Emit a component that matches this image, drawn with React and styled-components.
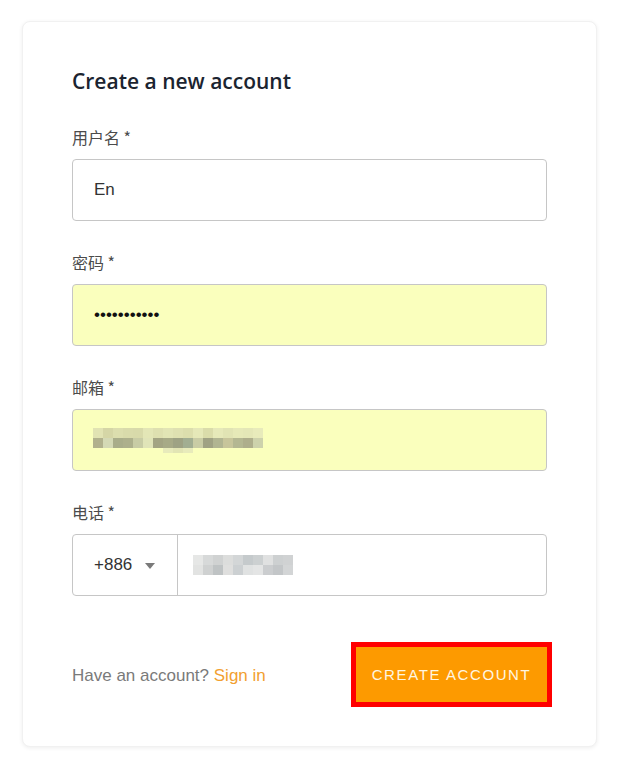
import React from "react";
import styled, { createGlobalStyle, css } from "styled-components";

const Global = createGlobalStyle`
  html, body { margin: 0; padding: 0; background: #ffffff; }
  body { font-family: "Liberation Sans", Arial, sans-serif; }
  * { box-sizing: border-box; }
`;

const Page = styled.div`
  padding: 21px 33px 28px 22px;
`;

const Card = styled.form`
  width: 575px;
  background: #fff;
  border-radius: 8px;
  border: 1px solid #f1f1f1;
  box-shadow: 0 1px 4px rgba(0, 0, 0, 0.07);
  padding: 44px 49px 44px 49px;
  display: flex;
  flex-direction: column;
`;

const Title = styled.h1`
  margin: 0 0 29px;
  font-family: "Open Sans", "Noto Sans", sans-serif;
  font-weight: 600;
  font-size: 21px;
  line-height: 30px;
  color: #1b2430;
`;

const Field = styled.div`
  display: flex;
  flex-direction: column;
  margin-bottom: 29px;
`;

const Label = styled.label`
  font-family: "Noto Sans CJK SC", "Noto Sans", sans-serif;
  font-size: 16px;
  line-height: 24px;
  color: #4b4b4b;
  margin-bottom: 10px;
`;

const boxCss = css`
  width: 100%;
  height: 62px;
  border: 1px solid #c6c6c6;
  border-radius: 4px;
  background: ${(p) => (p.$autofill ? "rgb(250, 255, 189)" : "#ffffff")};
  font-family: "Liberation Sans", Arial, sans-serif;
  font-size: 17px;
  color: #333;
`;

const Input = styled.input`
  ${boxCss}
  padding: 0 21px;
  outline: none;
  color: ${(p) => (p.type === "password" ? "#111" : "#333")};
`;

const Box = styled.div`
  ${boxCss}
  display: flex;
  align-items: center;
  padding: 0 0 0 20px;
`;

const PhoneBox = styled.div`
  ${boxCss}
  display: flex;
  align-items: stretch;
`;

const CodeSelect = styled.div`
  width: 105px;
  flex: none;
  display: flex;
  align-items: center;
  padding-left: 21px;
  gap: 13px;
  border-right: 1px solid #c6c6c6;
`;

const Caret = styled.span`
  width: 0;
  height: 0;
  border-left: 5.5px solid transparent;
  border-right: 5.5px solid transparent;
  border-top: 6px solid #7a7a7a;
  margin-top: 2px;
`;

const PhoneNumber = styled.div`
  flex: 1;
  display: flex;
  align-items: center;
  padding-left: 15px;
`;

const Footer = styled.div`
  margin-top: 22px;
  display: flex;
  align-items: center;
  justify-content: space-between;
  height: 55px;
`;

const Hint = styled.span`
  font-size: 17px;
  color: #7a7a7a;
  margin-top: 3px;
`;

const SignIn = styled.a`
  color: #f2a030;
  text-decoration: none;
`;

const Button = styled.button`
  width: 191px;
  height: 55px;
  border: none;
  outline: 5px solid #ff0000;
  background: #fd9a00;
  color: #fff6e0;
  font-family: "Liberation Sans", Arial, sans-serif;
  font-size: 15px;
  letter-spacing: 1.6px;
  text-transform: uppercase;
  padding: 0;
  cursor: pointer;
`;

const emailTop = ["#e1e3b3","#d5d6a6","#dcdeae","#d9dbab","#d8daaa","#e3e6b6","#dee0b0","#e2e5b5","#dfe1b1","#dcdead","#e5e8b8","#dadcaa","#e6e9b9","#e1e4b4","#e6e9b8","#e4e7b7","#e8ebbb"];
const emailBot = ["#b1b18d","#d4d9b5","#a9ad8a","#adb08c","#c8cca5","#e0e4b8","#a3a483","#a7aa87","#9ea284","#a2ae92","#c9cca5","#a0a284","#b1b592","#c7c59b","#b4b792","#aeae8c","#cdd2ac"];
const emailExtra = { 7: "#e8ebbb", 8: "#e2e5b4", 9: "#e8ebbb" };

const phoneTop = ["#e6e7e6","#d7d9d9","#d0d2d2","#dcdddc","#d3d6d7","#c5cacc","#ccd0d1","#e0e1e1","#cdd0d1","#d0d2d3"];
const phoneBot = ["#e2e3e2","#cfd1d1","#bfc3c4","#dfdfde","#ccd0d2","#e0e2e2","#e4e5e5","#cbcdcf","#c3c6c8","#d3d5d6"];

function Pixels({ rows, extra, height }) {
  const w = rows[0].length * 10;
  return (
    <svg width={w} height={height} viewBox={`0 0 ${w} ${height}`}>
      {rows.map((row, r) =>
        row.map((c, i) => (
          <rect key={`${r}-${i}`} x={i * 10} y={r * 10} width="10" height="10" fill={c} />
        ))
      )}
      {extra &&
        Object.entries(extra).map(([i, c]) => (
          <rect key={`x${i}`} x={i * 10} y={20} width="10" height="5" fill={c} />
        ))}
    </svg>
  );
}

export default function App() {
  return (
    <Page>
      <Global />
      <Card onSubmit={(e) => e.preventDefault()}>
        <Title>Create a new account</Title>
        <Field>
          <Label>用户名 *</Label>
          <Input defaultValue="En" />
        </Field>
        <Field>
          <Label>密码 *</Label>
          <Input type="password" $autofill defaultValue="abcdefghijk" />
        </Field>
        <Field>
          <Label>邮箱 *</Label>
          <Box $autofill>
            <Pixels rows={[emailTop, emailBot]} extra={emailExtra} height={25} />
          </Box>
        </Field>
        <Field>
          <Label>电话 *</Label>
          <PhoneBox>
            <CodeSelect>
              +886
              <Caret />
            </CodeSelect>
            <PhoneNumber>
              <Pixels rows={[phoneTop, phoneBot]} height={20} />
            </PhoneNumber>
          </PhoneBox>
        </Field>
        <Footer>
          <Hint>
            Have an account? <SignIn href="#">Sign in</SignIn>
          </Hint>
          <Button type="submit">Create account</Button>
        </Footer>
      </Card>
    </Page>
  );
}
